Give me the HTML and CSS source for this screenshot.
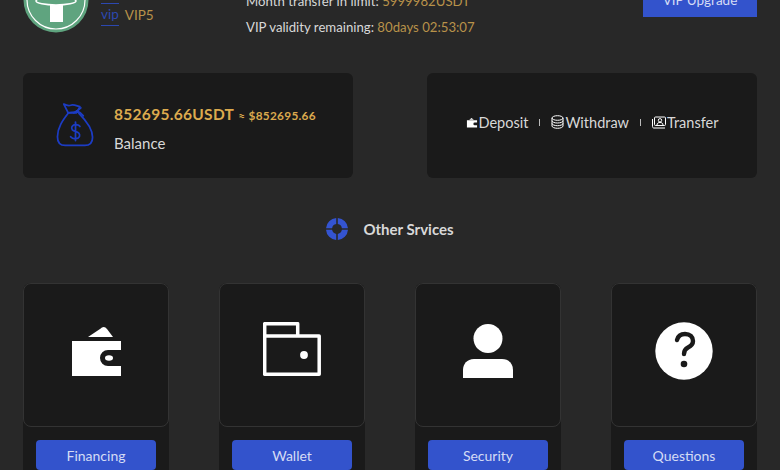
FILE: index.html
```html
<!DOCTYPE html>
<html lang="en">
<head>
    <meta charset="UTF-8">
    <meta name="viewport" content="width=device-width, initial-scale=1.0">
    <title>Account</title>
    <link rel="stylesheet" href="styles.css">
</head>
<body>
    <main class="page">
        <!-- Account header -->
        <section class="account">
            <div class="account-user">
                <svg class="logo" viewBox="0 0 66 66">
                    <circle cx="33" cy="33" r="32.5" fill="#5fa47f"/>
                    <circle cx="33" cy="33" r="29" fill="none" stroke="#fff" stroke-width="1.2"/>
                    <rect x="27" y="10" width="13" height="45" fill="#fff"/>
                    <ellipse cx="33" cy="34" rx="20" ry="4" fill="#5fa47f" stroke="#fff" stroke-width="1.5"/>
                </svg>
                <div class="level">
                    <span class="level-tag">vip</span>
                    <span class="level-name">VIP5</span>
                </div>
            </div>
            <div class="limits">
                <p>Month transfer in limit: <span class="gold">5999982USDT</span></p>
                <p>VIP validity remaining: <span class="gold">80days 02:53:07</span></p>
            </div>
            <button class="upgrade">VIP Upgrade</button>
        </section>

        <!-- Balance and actions -->
        <section class="summary">
            <div class="panel balance">
                <svg class="bag" viewBox="0 0 40 46" fill="none" stroke="#1c3cc4" stroke-width="1.800" stroke-linecap="round" stroke-linejoin="round">
                    <path d="M8 1.500c3 1.500 5 2 7 1.200 3-1.300 6 .6 9.500 1.500l-3.500 6.300H12.500z"/>
                    <path d="M12 10.500c3-.6 7-.6 10.500-.6"/>
                    <path d="M18 10.500c3-1 6-3.500 7.500-5M21 8.500c3 1 5 2.500 7 5"/>
                    <path d="M12.500 11C7 18 1.500 25.500 1.500 35c0 6 3 9 8 9h20c5 0 8-3 8-8.500 0-9.500-7-17.500-14-24.500"/>
                    <path d="M24.500 24.500c-1-2-6-3-8 0-1.500 3 1 4.500 3.500 5 3 .8 5 2.500 4 5.500-1.500 3-7 2.800-9 0M20 20v19"/>
                </svg>
                <div class="balance-text">
                    <p class="amount">852695.66USDT<small>≈ $852695.66</small></p>
                    <p class="balance-label">Balance</p>
                </div>
            </div>
            <div class="panel actions">
                <a class="action">
                    <svg width="12" height="13" viewBox="0 0 13 13"><path d="M6 1.500l2.500 2H3.500zM1 4h11v2.500H9.500a1.500 1.500 0 0 0 0 3H12V12H1z" fill="#fff"/></svg>Deposit
                </a>
                <span class="divider"></span>
                <a class="action">
                    <svg width="13" height="14" viewBox="0 0 13 14" fill="none" stroke="#fff"><ellipse cx="6.500" cy="3" rx="5.500" ry="2.300"/><path d="M1 3v8c0 1.300 2.500 2.300 5.500 2.300S12 12.300 12 11V3M1 5.700c0 1.300 2.500 2.300 5.500 2.300S12 7 12 5.700M1 8.400c0 1.300 2.500 2.300 5.500 2.300S12 9.700 12 8.400"/></svg>Withdraw
                </a>
                <span class="divider"></span>
                <a class="action">
                    <svg width="14" height="13" viewBox="0 0 14 13" fill="none" stroke="#fff"><rect x="2.500" y="1" width="11" height="8.500" rx="1"/><path d="M.5 3v7.500c0 1 .5 1.500 1.500 1.500h11"/><circle cx="8" cy="4.300" r="1.700"/><path d="M5 9c0-2 1.500-2.500 3-2.500s3 .5 3 2.500" /></svg>Transfer
                </a>
            </div>
        </section>

        <!-- Other services -->
        <h2 class="services-title">
            <svg width="22" height="22" viewBox="0 0 22 22"><path fill="#3454d1" d="M10.200 0v6.100a5 5 0 0 0-4.100 4.100H0A11 11 0 0 1 10.200 0zM11.800 0A11 11 0 0 1 22 10.200h-6.100a5 5 0 0 0-4.100-4.100zM0 11.800h6.100a5 5 0 0 0 4.100 4.100V22A11 11 0 0 1 0 11.800zM15.900 11.800H22A11 11 0 0 1 11.800 22v-6.100a5 5 0 0 0 4.100-4.100z"/></svg>
            <span>Other Srvices</span>
        </h2>

        <section class="services">
            <div class="service">
                <div class="service-icon">
                    <svg width="49" height="50" viewBox="0 0 49 50" fill="#fff"><path d="M16 11L28 3q4-4 7 0l6 8z"/><path d="M0 15h49v9H36a8 8 0 0 0 0 16h13v10H0z"/><ellipse cx="37" cy="32" rx="4" ry="2.800"/></svg>
                </div>
                <div class="service-foot"><button>Financing</button></div>
            </div>
            <div class="service">
                <div class="service-icon">
                    <svg width="58" height="58" viewBox="0 0 58 58" fill="none" stroke="#fff" stroke-width="3.500" stroke-linejoin="round"><path d="M1.700 1.700h33v12.200h21.500v38.400H1.700zM1.700 13.900h33"/><circle cx="41" cy="33" r="3.900" fill="#fff" stroke="none"/></svg>
                </div>
                <div class="service-foot"><button>Wallet</button></div>
            </div>
            <div class="service">
                <div class="service-icon">
                    <svg width="50" height="54" viewBox="0 0 50 54" fill="#fff"><circle cx="25" cy="14.500" r="14.500"/><path d="M0 54V46c0-6 4-11 11-11h28c7 0 11 5 11 11v8z"/></svg>
                </div>
                <div class="service-foot"><button>Security</button></div>
            </div>
            <div class="service">
                <div class="service-icon">
                    <svg width="58" height="58" viewBox="0 0 58 58"><circle cx="29" cy="29" r="28.700" fill="#fff"/><path d="M22 18c1-4 4-6 8-6 5 0 8 3 8 7 0 3-2 5-5 6.500-3 1.500-4 3-4 6.500" fill="none" stroke="#1a1a1a" stroke-width="4.400" stroke-linecap="round"/><circle cx="29" cy="42" r="3.300" fill="#1a1a1a"/></svg>
                </div>
                <div class="service-foot"><button>Questions</button></div>
            </div>
        </section>
    </main>
</body>
</html>
```
FILE: styles.css
```css
html, body {
    height: 100%;
    margin: 0;
    overflow: hidden;
}

body {
    font-family: Lato, "Open Sans", sans-serif;
    background-color: #282828;
    color: #d8d8d8;
}

p, h2 {
    margin: 0;
}

.page {
    padding: 0 23px;
    margin-top: -33px;
}

.gold {
    color: #b8924a;
}

button {
    font-family: inherit;
    background-color: #3353cc;
    color: #d5dcf5;
    border: none;
}

/* Account header */
.account {
    display: flex;
    height: 66px;
}

.account-user {
    display: flex;
    width: 223px;
}

.logo {
    width: 66px;
    height: 66px;
}

.level {
    display: flex;
    align-items: center;
    gap: 6px;
    margin: 36px 0 0 12px;
    height: 23px;
    font-size: 13.5px;
}

.level-tag {
    color: #2c48b0;
    line-height: 21px;
    border-top: 1px solid #2c48b0;
    border-bottom: 1px solid #2c48b0;
}

.level-name {
    color: #b8924a;
}

.limits {
    flex: 1;
    font-size: 13.2px;
    line-height: 26px;
    padding-top: 21px;
}

.limits p {
    white-space: nowrap;
}

.upgrade {
    width: 114px;
    height: 50px;
    padding: 15px 0 0;
    font-size: 13.5px;
}

/* Balance and actions */
.summary {
    display: flex;
    justify-content: space-between;
    margin-top: 40px;
}

.panel {
    width: 330px;
    height: 105px;
    box-sizing: border-box;
    background-color: #1a1a1a;
    border-radius: 6px;
    display: flex;
    align-items: center;
}

.balance {
    padding-left: 33px;
    gap: 19px;
}

.bag {
    width: 39px;
    height: 46px;
    margin-bottom: 1px;
}

.balance-text {
    padding-top: 6px;
}

.amount {
    color: #dcaa4e;
    font-size: 15.5px;
    font-weight: 700;
    letter-spacing: 0.3px;
}

.amount small {
    font-size: 11.8px;
    margin-left: 4px;
}

.balance-label {
    font-size: 15px;
    margin-top: 11px;
}

.actions {
    justify-content: center;
    gap: 11px;
    padding-bottom: 7px;
}

.action {
    display: flex;
    align-items: center;
    gap: 1px;
    font-size: 14.5px;
}

.divider {
    width: 1px;
    height: 7px;
    background-color: #bbb;
}

/* Other services */
.services-title {
    display: flex;
    align-items: center;
    justify-content: center;
    gap: 15px;
    margin-top: 40px;
    height: 22px;
    font-size: 15px;
    font-weight: 700;
}

.services {
    display: flex;
    justify-content: space-between;
    margin-top: 43px;
}

.service {
    width: 146px;
    background-color: #1a1a1a;
    border-radius: 8px 8px 0 0;
}

.service-icon {
    height: 144px;
    box-sizing: border-box;
    padding-bottom: 8px;
    border: 1px solid #333;
    border-radius: 8px;
    display: flex;
    align-items: center;
    justify-content: center;
}

.service-foot {
    padding: 13px 13px 0;
}

.service-foot button {
    display: block;
    width: 100%;
    height: 30px;
    padding: 0;
    border-radius: 4px;
    font-size: 14px;
}
```
